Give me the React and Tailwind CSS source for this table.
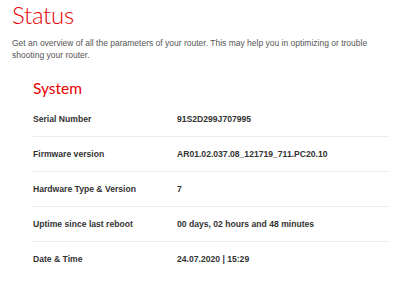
import React from "react";

const rows = [
  { label: "Serial Number", value: "91S2D299J707995" },
  { label: "Firmware version", value: "AR01.02.037.08_121719_711.PC20.10" },
  { label: "Hardware Type & Version", value: "7" },
  { label: "Uptime since last reboot", value: "00 days, 02 hours and 48 minutes" },
  { label: "Date & Time", value: "24.07.2020 | 15:29" },
];

const App = () => {
  return (
    <div className="w-[400px] h-[301px] bg-white overflow-hidden font-['Liberation_Sans',Arial,sans-serif]">
      <div className="pl-[12px] pr-[11px]">
        <h1 className="pt-[3px] text-[24px] leading-[24px] font-light text-[#e60000] font-['Lato',sans-serif] tracking-[-0.3px]">
          Status
        </h1>

        <p className="mt-[10px] text-[8.5px] leading-[12px] text-[#555555]">
          Get an overview of all the parameters of your router. This may help you in optimizing or trouble
          shooting your router.
        </p>

        <div className="pl-[21px] mt-[18px]">
          <h2 className="text-[15.5px] leading-[18px] text-[#e60000] font-['Lato',sans-serif]">
            System
          </h2>

          <div className="mt-[5px]">
            {rows.map((row, i) => (
              <div
                key={row.label}
                className={
                  i < rows.length - 1
                    ? "flex items-center h-[35px] border-b border-[#ececec] text-[8.6px] font-bold text-[#333333]"
                    : "flex items-center h-[34px] text-[8.6px] font-bold text-[#333333]"
                }
              >
                <div className="w-[144px]">{row.label}</div>
                <div>{row.value}</div>
              </div>
            ))}
          </div>
        </div>
      </div>
    </div>
  );
};

export default App;
